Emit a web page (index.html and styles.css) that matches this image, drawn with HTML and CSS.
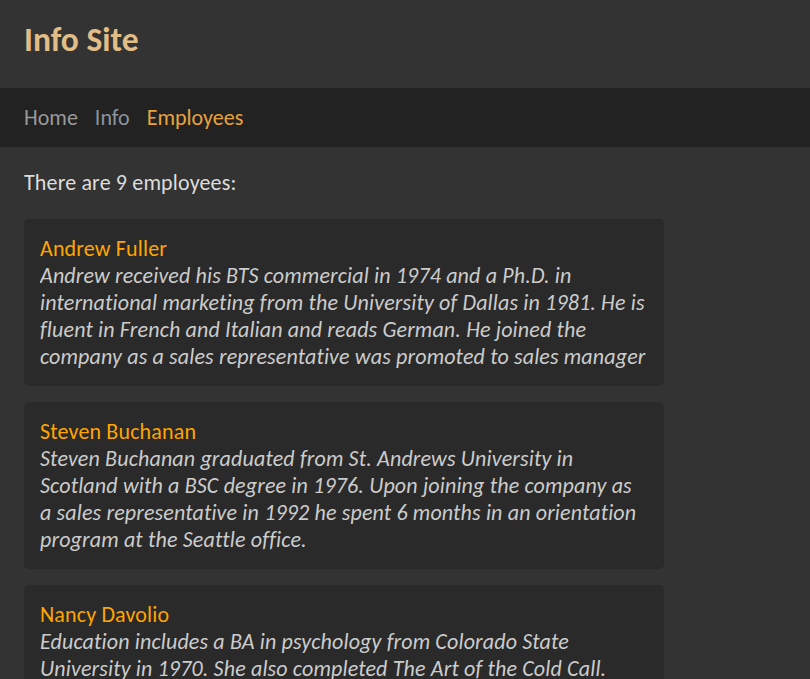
FILE: index.html
```html
<!DOCTYPE html>
<html lang="en">
<head>
<meta charset="utf-8">
<title>Info Site</title>
<link rel="stylesheet" href="styles.css">
</head>
<body>
<header class="site-header">
  <h1 class="site-title">Info Site</h1>
</header>
<nav class="site-nav">
  <a class="nav-link" href="#">Home</a>
  <a class="nav-link nav-link-info" href="#">Info</a>
  <a class="nav-link nav-link-active" href="#">Employees</a>
</nav>
<main class="content">
  <p class="intro">There are 9 employees:</p>
  <div class="card">
    <div class="card-name">Andrew Fuller</div>
    <p class="card-notes">Andrew received his BTS commercial in 1974 and a Ph.D. in international marketing from the University of Dallas in 1981. He is fluent in French and Italian and reads German. He joined the company as a sales representative was promoted to sales manager in January 1992 and to vice president of sales in March 1993.</p>
  </div>
  <div class="card">
    <div class="card-name">Steven Buchanan</div>
    <p class="card-notes">Steven Buchanan graduated from St. Andrews University in Scotland with a BSC degree in 1976. Upon joining the company as a sales representative in 1992 he spent 6 months in an orientation program at the Seattle office.</p>
  </div>
  <div class="card">
    <div class="card-name">Nancy Davolio</div>
    <p class="card-notes">Education includes a BA in psychology from Colorado State University in 1970. She also completed The Art of the Cold Call. Nancy is a member of Toastmasters International.</p>
  </div>
</main>
</body>
</html>
```
FILE: styles.css
```css
html, body {
  margin: 0;
  padding: 0;
}
body {
  background: #333333;
  font-family: Carlito, Calibri, Lato, "Open Sans", sans-serif;
  font-size: 22px;
  line-height: 27px;
  letter-spacing: 0.15px;
  color: #dddddd;
}
.site-header {
  background: #333333;
  padding: 20px 24px 28px;
}
.site-title {
  margin: 0;
  font-size: 33.5px;
  line-height: 40px;
  font-weight: 700;
  letter-spacing: 0;
  color: #e1bd87;
}
.site-nav {
  background: #222222;
  padding: 16px 24px;
  display: flex;
  gap: 17px;
  letter-spacing: 0;
}
.nav-link {
  text-decoration: none;
  color: #999999;
}
.nav-link-info {
  color: #8b939f;
}
.nav-link-active {
  color: #e8a33c;
}
.content {
  padding: 22px 24px 24px;
}
.intro {
  margin: 0 0 23px;
}
.card {
  width: 608px;
  background: #2a2a2a;
  border-radius: 5px;
  padding: 16px;
  margin-bottom: 16px;
}
.card-name {
  color: #ffa500;
}
.card-notes {
  margin: 0;
  font-style: italic;
  color: #cccccc;
  height: 108px;
  overflow: hidden;
}
```
